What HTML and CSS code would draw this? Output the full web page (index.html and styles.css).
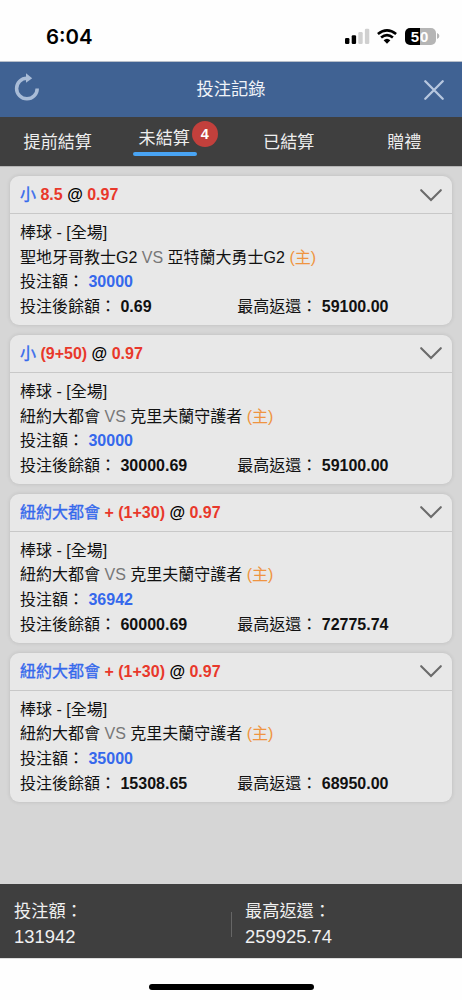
FILE: index.html
```html
<!DOCTYPE html>
<html lang="zh-Hant">
<head>
<meta charset="utf-8">
<meta name="viewport" content="width=device-width">
<title>投注記錄</title>
<link rel="stylesheet" href="styles.css">
</head>
<body>
<div class="status">
  <span class="time">6:04</span>
  <div class="status-icons">
    <svg class="signal" width="25" height="16" viewBox="0 0 25 16"><rect x="0" y="10" width="4.4" height="6" rx="1.2"/><rect x="6.7" y="7.3" width="4.4" height="8.7" rx="1.2"/><g fill="#d0d0d0"><rect x="13.3" y="4" width="4.4" height="12" rx="1.2"/><rect x="19.9" y="0.7" width="4.4" height="15.3" rx="1.2"/></g></svg>
    <svg class="wifi" width="20" height="15" viewBox="0 0 20 15"><g fill="none" stroke="#000" stroke-width="2.6"><path d="M.9 5.1Q10-2.4 19.1 5.1"/><path d="M4.1 8.6Q10 3.6 15.9 8.6"/></g><path d="M6.6 11.3Q10 8.3 13.4 11.3L10 14.8Z"/></svg>
    <div class="battery"><span class="level">50</span><svg width="3" height="6" viewBox="0 0 3 6"><path d="M0 0Q2.4 1 2.4 3T0 6Z" fill="#b5b5b5"/></svg></div>
  </div>
</div>
<header class="titlebar">
  <svg class="refresh" width="26" height="28" viewBox="0 0 26 28"><path d="M13 5.2A10.3 10.3 0 1 0 23.2 15.4" fill="none" stroke="#a9bcd7" stroke-width="3.5"/><path d="M12 .2L18.2 5.2L12 9.8Z" fill="#a9bcd7"/></svg>
  <h1>投注記錄</h1>
  <svg class="close" width="20" height="20" viewBox="0 0 20 20"><path d="M1.3 1.3L18.7 18.7M18.7 1.3L1.3 18.7" stroke="#b7c7df" stroke-width="2.3" stroke-linecap="round"/></svg>
</header>
<nav class="tabs">
  <span class="tab">提前結算</span>
  <span class="tab active">未結算<b class="badge">4</b></span>
  <span class="tab">已結算</span>
  <span class="tab">贈禮</span>
</nav>
<main class="list">
  <section class="card">
    <h2><span><i>小</i> <em>8.5</em> @ <em>0.97</em></span><svg class="chevron" width="22" height="13" viewBox="0 0 22 13"><path d="M1.2 1.2L11 11L20.8 1.2"/></svg></h2>
    <div class="body">
      <p>棒球 - [全場]</p>
      <p>聖地牙哥教士G2 <span class="vs">VS</span> 亞特蘭大勇士G2 <span class="home">(主)</span></p>
      <p>投注額： <b class="stake">30000</b></p>
      <p class="pair"><span>投注後餘額： <b>0.69</b></span><span>最高返還： <b>59100.00</b></span></p>
    </div>
  </section>
  <section class="card">
    <h2><span><i>小</i> <em>(9+50)</em> @ <em>0.97</em></span><svg class="chevron" width="22" height="13" viewBox="0 0 22 13"><path d="M1.2 1.2L11 11L20.8 1.2"/></svg></h2>
    <div class="body">
      <p>棒球 - [全場]</p>
      <p>紐約大都會 <span class="vs">VS</span> 克里夫蘭守護者 <span class="home">(主)</span></p>
      <p>投注額： <b class="stake">30000</b></p>
      <p class="pair"><span>投注後餘額： <b>30000.69</b></span><span>最高返還： <b>59100.00</b></span></p>
    </div>
  </section>
  <section class="card">
    <h2><span><i>紐約大都會</i> <em>+ (1+30)</em> @ <em>0.97</em></span><svg class="chevron" width="22" height="13" viewBox="0 0 22 13"><path d="M1.2 1.2L11 11L20.8 1.2"/></svg></h2>
    <div class="body">
      <p>棒球 - [全場]</p>
      <p>紐約大都會 <span class="vs">VS</span> 克里夫蘭守護者 <span class="home">(主)</span></p>
      <p>投注額： <b class="stake">36942</b></p>
      <p class="pair"><span>投注後餘額： <b>60000.69</b></span><span>最高返還： <b>72775.74</b></span></p>
    </div>
  </section>
  <section class="card">
    <h2><span><i>紐約大都會</i> <em>+ (1+30)</em> @ <em>0.97</em></span><svg class="chevron" width="22" height="13" viewBox="0 0 22 13"><path d="M1.2 1.2L11 11L20.8 1.2"/></svg></h2>
    <div class="body">
      <p>棒球 - [全場]</p>
      <p>紐約大都會 <span class="vs">VS</span> 克里夫蘭守護者 <span class="home">(主)</span></p>
      <p>投注額： <b class="stake">35000</b></p>
      <p class="pair"><span>投注後餘額： <b>15308.65</b></span><span>最高返還： <b>68950.00</b></span></p>
    </div>
  </section>
</main>
<footer class="totals">
  <div><span>投注額：</span><strong>131942</strong></div>
  <div><span>最高返還：</span><strong>259925.74</strong></div>
</footer>
<div class="home-area"><div class="home-bar"></div></div>
</body>
</html>
```
FILE: styles.css
```css
* { box-sizing: border-box; }
body {
  margin: 0;
  height: 1000px;
  display: flex;
  flex-direction: column;
  background: #fefefe;
  color: #111;
  font: 16px "Liberation Sans", "Noto Sans CJK TC", sans-serif;
}
h1, h2, p { margin: 0; }
svg { display: block; flex: none; }
.status {
  height: 62px;
  flex: none;
  display: flex;
  justify-content: space-between;
  padding: 24px 22.5px 0 46px;
  border-bottom: 1px solid #b8bfca;
}
.time { font: 600 20.4px/26px Inter, sans-serif; color: #000; }
.status-icons { display: flex; height: 24px; align-items: center; }
.signal { margin-right: 7px; }
.wifi { margin-right: 8px; }
.battery { display: flex; align-items: center; gap: 1px; }
.level {
  width: 31px;
  height: 17px;
  border-radius: 5px;
  background: linear-gradient(90deg, #000 50%, #b5b5b5 50%);
  color: #fff;
  font: 700 15px/17px "Liberation Sans", sans-serif;
  letter-spacing: .8px;
  text-align: center;
}
.titlebar {
  height: 55px;
  flex: none;
  display: flex;
  align-items: center;
  justify-content: space-between;
  padding: 0 18px 0 14px;
  background: #406293;
  color: #f0f3f8;
}
.titlebar h1 { margin: -1px 2px 0 0; font-size: 17.2px; font-weight: 400; line-height: 26px; }
.refresh { margin-top: -5px; }
.tabs {
  height: 49px;
  flex: none;
  display: grid;
  grid-template-columns: repeat(4, 1fr);
  justify-items: center;
  align-items: start;
  background: #3f3f3f;
  color: #eee;
  font-size: 17.1px;
  line-height: 26px;
}
.tab { margin-top: 13px; }
.active {
  position: relative;
  width: 64px;
  height: 31px;
  margin: 8px 18px 0 0;
  padding-top: 1px;
  text-align: center;
}
.active::after {
  content: "";
  position: absolute;
  left: .5px;
  bottom: 0;
  width: 100%;
  height: 4px;
  border-radius: 2px;
  background: #49a4f4;
}
.badge {
  position: absolute;
  left: 59.5px;
  top: -4px;
  width: 26px;
  height: 26px;
  border-radius: 50%;
  background: #c2403c;
  color: #fff;
  font-size: 14.5px;
  line-height: 26px;
}
.list {
  flex: 1;
  display: flex;
  flex-direction: column;
  gap: 9.9px;
  padding: 9px 10px 0;
  background: #d6d6d6;
  border-top: 1px solid #b5b5b5;
}
.card {
  height: 149px;
  flex: none;
  border-radius: 9px;
  background: #e8e8e8;
  box-shadow: 0 0 4px rgba(0, 0, 0, .12);
}
.card h2 {
  height: 38px;
  display: flex;
  align-items: center;
  justify-content: space-between;
  padding: 1px 10px 0;
  border-bottom: 1px solid #c8c8c8;
  font-size: 16px;
  line-height: 24px;
  color: #000;
}
.card i { font-style: normal; font-weight: 400; color: #3568ec; -webkit-text-stroke: .35px #3568ec; }
.card em { font-style: normal; color: #e8382b; }
.chevron path { fill: none; stroke: #6b6b6b; stroke-width: 2.1; stroke-linecap: round; }
.body { padding: 7px 10px 0; line-height: 24.7px; }
.body p { height: 24.7px; white-space: nowrap; }
.vs { color: #777; }
.home { color: #ef9440; }
.stake { color: #3568ec; }
.pair { display: grid; grid-template-columns: 217.3px 1fr; }
.totals {
  height: 74px;
  flex: none;
  display: grid;
  grid-template-columns: 1fr 1fr;
  align-items: center;
  background: #3f3f3f;
  color: #f0f0f0;
}
.totals div {
  display: flex;
  flex-direction: column;
  padding: 5px 0 0 14px;
  font-size: 17.2px;
  line-height: 25px;
}
.totals strong { font-weight: 400; font-size: 18.4px; }
.totals div + div {
  background: linear-gradient(#666, #666) 0 60% / 1px 25px no-repeat;
}
.home-area { height: 42px; flex: none; display: flex; justify-content: center; padding-top: 25px; border-top: 1px solid #ddd; }
.home-bar { width: 165px; height: 6px; border-radius: 3px; background: #000; }
```
